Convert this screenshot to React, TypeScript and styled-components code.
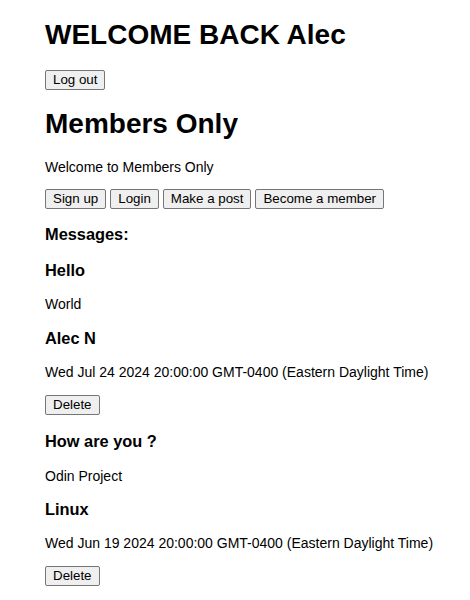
import React from "react";
import styled, { createGlobalStyle } from "styled-components";

const Global = createGlobalStyle`
  html, body { background: #ffffff; }
  body {
    margin: 0;
    font-family: "Liberation Sans", Arial, sans-serif;
    font-size: 14px;
    color: #000000;
  }
`;

const Page = styled.div`
  padding: 0 8px 0 45px;
`;

const Title = styled.h1`
  font-size: 28px;
  font-weight: bold;
  margin: 18.76px 0;
`;

const Text = styled.p`
  font-size: 14px;
  margin: 14px 0;
`;

const Heading = styled.h3`
  font-size: 16.38px;
  font-weight: bold;
  margin: 16.38px 0;
`;

const Button = styled.button`
  display: inline-block;
  font-family: "Liberation Sans", Arial, sans-serif;
  font-size: 13.3333px;
  line-height: 16px;
  padding: 1px 7px;
  color: #000000;
  background: #efefef;
  border: 1px solid #767676;
  border-radius: 2px;
`;

const DeleteButton = styled(Button)`
  margin-top: 1px;
  margin-bottom: 1px;
`;

const ButtonRow = styled.div`
  display: flex;
  gap: 4px;
  margin-bottom: 2px;
`;

const Message = styled.div``;

const messages = [
  { title: "Hello", body: "World", date: null },
  { title: "Alec N", body: null, date: "Wed Jul 24 2024 20:00:00 GMT-0400 (Eastern Daylight Time)" },
  { title: "How are you ?", body: "Odin Project", date: null },
  { title: "Linux", body: null, date: "Wed Jun 19 2024 20:00:00 GMT-0400 (Eastern Daylight Time)" },
];

export default function App() {
  return (
    <>
      <Global />
      <Page>
        <Title>WELCOME BACK Alec</Title>
        <Button>Log out</Button>
        <Title>Members Only</Title>
        <Text>Welcome to Members Only</Text>
        <ButtonRow>
          <Button>Sign up</Button>
          <Button>Login</Button>
          <Button>Make a post</Button>
          <Button>Become a member</Button>
        </ButtonRow>
        <Heading>Messages:</Heading>
        {messages.map((m) => (
          <Message key={m.title}>
            <Heading>{m.title}</Heading>
            {m.body && <Text>{m.body}</Text>}
            {m.date && (
              <>
                <Text>{m.date}</Text>
                <DeleteButton>Delete</DeleteButton>
              </>
            )}
          </Message>
        ))}
      </Page>
    </>
  );
}
